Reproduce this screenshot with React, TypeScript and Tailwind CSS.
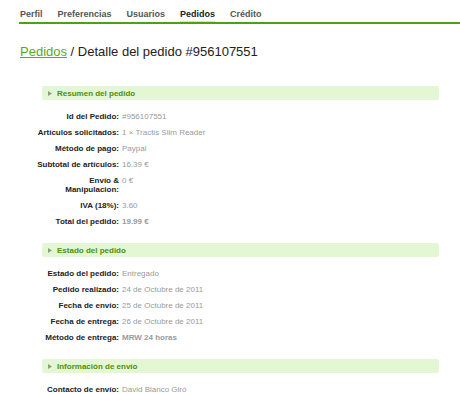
import React from "react";

const tabs = ["Perfil", "Preferencias", "Usuarios", "Pedidos", "Crédito"];

const SectionHeader: React.FC<{ title: string }> = ({ title }) => (
  <div className="ml-[22px] mr-[1px] h-[14px] rounded-[2px] bg-[#e4f7d4] flex items-center pl-[6px]">
    <svg width="4" height="5" viewBox="0 0 4 5" className="shrink-0">
      <polygon points="0,0 4,2.5 0,5" fill="#8d9f7c" />
    </svg>
    <span className="ml-[5px] text-[8px] leading-[9px] font-bold text-[#4f8f0b]">{title}</span>
  </div>
);

const Row: React.FC<{ label: string; value: string; strong?: boolean }> = ({ label, value, strong }) => (
  <div className="flex py-[3.5px] leading-[9px] text-[8px]">
    <div className="w-[84px] shrink-0 text-right font-bold text-[#222]">{label}</div>
    <div className={`pl-[3px] text-[#9a9a9a] ${strong ? "font-bold" : ""}`}>{value}</div>
  </div>
);

export default function App() {
  return (
    <div className="w-[460px] h-[394px] overflow-hidden bg-white" style={{ fontFamily: '"Liberation Sans", Arial, sans-serif' }}>
      {/* tabs */}
      <div className="ml-[19px] border-b-2 border-[#4ca10e] flex gap-[15px] pl-[1px] pt-[9px]">
        {tabs.map((t) => (
          <div
            key={t}
            className={`text-[9px] leading-[10px] font-bold pb-[2px] border-b ${
              t === "Pedidos" ? "text-[#222] border-[#cfe9b9]" : "text-[#555] border-transparent"
            }`}
          >
            {t}
          </div>
        ))}
      </div>

      <div className="px-[20px]">
        <h1 className="mt-[20px] text-[13px] leading-[15px] text-[#222]">
          <span className="text-[#5aab1c] underline">Pedidos</span> / Detalle del pedido #956107551
        </h1>

        <div className="mt-[27px]">
          <SectionHeader title="Resumen del pedido" />
          <div className="mt-[8px] pl-[15px]">
            <Row label="Id del Pedido:" value="#956107551" />
            <Row label="Artículos solicitados:" value="1 × Tractis Slim Reader" />
            <Row label="Método de pago:" value="Paypal" />
            <Row label="Subtotal de artículos:" value="16.39 €" />
            <Row label="Envío & Manipulacion:" value="0 €" />
            <Row label="IVA (18%):" value="3.60" />
            <Row label="Total del pedido:" value="19.99 €" strong />
          </div>
        </div>

        <div className="mt-[14px]">
          <SectionHeader title="Estado del pedido" />
          <div className="mt-[8px] pl-[15px]">
            <Row label="Estado del pedido:" value="Entregado" />
            <Row label="Pedido realizado:" value="24 de Octubre de 2011" />
            <Row label="Fecha de envío:" value="25 de Octubre de 2011" />
            <Row label="Fecha de entrega:" value="26 de Octubre de 2011" />
            <Row label="Método de entrega:" value="MRW 24 horas" strong />
          </div>
        </div>

        <div className="mt-[14px]">
          <SectionHeader title="Información de envío" />
          <div className="mt-[8px] pl-[15px]">
            <Row label="Contacto de envío:" value="David Blanco Giró" />
          </div>
        </div>
      </div>
    </div>
  );
}
